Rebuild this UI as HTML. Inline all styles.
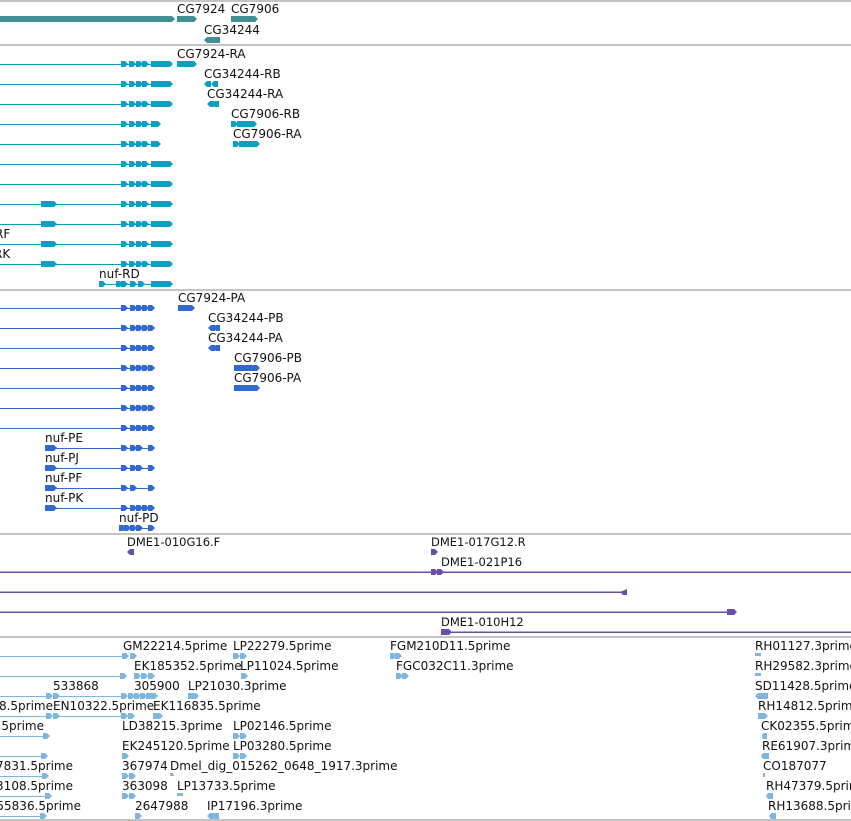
<!DOCTYPE html>
<html><head><meta charset="utf-8"><style>
html,body{margin:0;padding:0;background:#fff;width:851px;height:821px;overflow:hidden}
svg{display:block}
text{font-family:"DejaVu Sans","Liberation Sans",sans-serif;font-size:12px;fill:#111}
rect{shape-rendering:crispEdges}
</style></head><body>
<svg width="851" height="821" viewBox="0 0 851 821" xmlns="http://www.w3.org/2000/svg">
<defs>
<path id="ra" d="M0,-3h4l3,3l-3,3h-4z"/>
<path id="la" d="M7,-3h-4l-3,3l3,3h4z"/>
<path id="bigT" d="M151,-3h19l3,3l-3,3h-19z"/>
<path id="shortT" d="M151,-3h7l3,3l-3,3h-7z"/>
<g id="rowT"><rect x="0" y="0" width="151" height="1"/><use href="#ra" x="121"/><use href="#ra" x="129"/><use href="#ra" x="136"/><use href="#ra" x="142"/></g>
<g id="rowB"><rect x="0" y="0" width="150" height="1"/><use href="#ra" x="121"/><use href="#ra" x="130"/><use href="#ra" x="136"/><use href="#ra" x="142"/><use href="#ra" x="148"/></g>
</defs>
<g fill="#c4c4c4">
<rect x="0" y="0" width="851" height="2"/>
<rect x="0" y="44" width="851" height="2"/>
<rect x="0" y="289" width="851" height="2"/>
<rect x="0" y="533" width="851" height="2"/>
<rect x="0" y="636" width="851" height="2"/>
<rect x="0" y="819" width="851" height="2"/>
</g>

<g fill="#3f8f95">
<path d="M0,16h172l3,3l-3,3h-172z"/>
<path d="M177,16h17l3,3l-3,3h-17z"/>
<path d="M231,16h24l3,3l-3,3h-24z"/>
<path d="M207,37h13v6h-13l-3,-3z"/>
</g>
<text x="177" y="13">CG7924</text>
<text x="231" y="13">CG7906</text>
<text x="204" y="34">CG34244</text>

<g fill="#0b9fc1">
<g transform="translate(0,64)"><use href="#rowT"/><use href="#bigT"/><path d="M177,-3h17l3,3l-3,3h-17z"/></g>
<g transform="translate(0,84)"><use href="#rowT"/><use href="#bigT"/><use href="#la" x="204"/><use href="#la" x="211"/></g>
<g transform="translate(0,104)"><use href="#rowT"/><use href="#bigT"/><use href="#la" x="207"/><use href="#la" x="212"/></g>
<g transform="translate(0,124)"><use href="#rowT"/><use href="#shortT"/><use href="#ra" x="231"/><path d="M237,-3h17l3,3l-3,3h-17z"/></g>
<g transform="translate(0,144)"><use href="#rowT"/><use href="#shortT"/><use href="#ra" x="233"/><path d="M239,-3h14l3,3l-3,3h-14z"/><use href="#ra" x="253"/></g>
<g transform="translate(0,164)"><use href="#rowT"/><use href="#bigT"/></g>
<g transform="translate(0,184)"><use href="#rowT"/><use href="#bigT"/></g>
<g transform="translate(0,204)"><use href="#rowT"/><use href="#bigT"/><path d="M41,-3h13l3,3l-3,3h-13z"/></g>
<g transform="translate(0,224)"><use href="#rowT"/><use href="#bigT"/><path d="M41,-3h13l3,3l-3,3h-13z"/></g>
<g transform="translate(0,244)"><use href="#rowT"/><use href="#bigT"/><path d="M41,-3h13l3,3l-3,3h-13z"/></g>
<g transform="translate(0,264)"><use href="#rowT"/><use href="#bigT"/><path d="M41,-3h13l3,3l-3,3h-13z"/></g>
<g transform="translate(0,284)"><rect x="99" y="0" width="52" height="1"/><use href="#ra" x="99"/><use href="#ra" x="116"/><use href="#ra" x="121"/><use href="#ra" x="130"/><use href="#ra" x="138"/><use href="#bigT"/></g>
</g>
<text x="177" y="58">CG7924-RA</text>
<text x="204" y="78">CG34244-RB</text>
<text x="207" y="98">CG34244-RA</text>
<text x="231" y="118">CG7906-RB</text>
<text x="233" y="138">CG7906-RA</text>
<text x="-5" y="238">RF</text>
<text x="-6" y="258">RK</text>
<text x="99" y="278">nuf-RD</text>

<g fill="#3069cf">
<g transform="translate(0,308)"><use href="#rowB"/><path d="M178,-3h14l3,3l-3,3h-14z"/></g>
<g transform="translate(0,328)"><use href="#rowB"/><use href="#la" x="208"/><use href="#la" x="213"/></g>
<g transform="translate(0,348)"><use href="#rowB"/><use href="#la" x="208"/><use href="#la" x="213"/></g>
<g transform="translate(0,368)"><use href="#rowB"/><path d="M234,-3h19l3,3l-3,3h-19z"/><use href="#ra" x="253"/></g>
<g transform="translate(0,388)"><use href="#rowB"/><path d="M234,-3h19l3,3l-3,3h-19z"/><use href="#ra" x="253"/></g>
<g transform="translate(0,408)"><use href="#rowB"/></g>
<g transform="translate(0,428)"><use href="#rowB"/></g>
<g transform="translate(0,448)"><rect x="45" y="0" width="105" height="1"/><path d="M45,-3h9l3,3l-3,3h-9z"/><use href="#ra" x="121"/><use href="#ra" x="130"/><use href="#ra" x="136"/><use href="#ra" x="148"/></g>
<g transform="translate(0,468)"><rect x="45" y="0" width="105" height="1"/><path d="M45,-3h9l3,3l-3,3h-9z"/><use href="#ra" x="121"/><use href="#ra" x="130"/><use href="#ra" x="136"/><use href="#ra" x="148"/></g>
<g transform="translate(0,488)"><rect x="45" y="0" width="105" height="1"/><path d="M45,-3h9l3,3l-3,3h-9z"/><use href="#ra" x="121"/><use href="#ra" x="130"/><use href="#ra" x="148"/></g>
<g transform="translate(0,508)"><rect x="45" y="0" width="105" height="1"/><path d="M45,-3h9l3,3l-3,3h-9z"/><use href="#ra" x="121"/><use href="#ra" x="130"/><use href="#ra" x="136"/><use href="#ra" x="142"/><use href="#ra" x="148"/></g>
<g transform="translate(0,528)"><rect x="119" y="0" width="31" height="1"/><use href="#ra" x="119"/><use href="#ra" x="124"/><use href="#ra" x="130"/><use href="#ra" x="136"/><use href="#ra" x="148"/></g>
</g>
<text x="178" y="302">CG7924-PA</text>
<text x="208" y="322">CG34244-PB</text>
<text x="208" y="342">CG34244-PA</text>
<text x="234" y="362">CG7906-PB</text>
<text x="234" y="382">CG7906-PA</text>
<text x="45" y="442">nuf-PE</text>
<text x="45" y="462">nuf-PJ</text>
<text x="45" y="482">nuf-PF</text>
<text x="45" y="502">nuf-PK</text>
<text x="119" y="522">nuf-PD</text>

<g fill="#6a4fa8">
<path d="M130,549h4v6h-4l-3,-3z"/>
<path d="M431,549h4l3,3l-3,3h-4z"/>
<rect x="0" y="571.5" width="851" height="1.5"/><use href="#ra" x="431" y="572"/><use href="#ra" x="437" y="572"/>
<rect x="0" y="591.5" width="624" height="1.5"/><path d="M627,589v6h-4l-3,-3z"/>
<rect x="0" y="611.5" width="730" height="1.5"/><path d="M727,609h7l3,3l-3,3h-7z"/>
<rect x="441" y="631.5" width="410" height="1.5"/><path d="M441,629h8l3,3l-3,3h-8z"/>
</g>
<text x="127" y="546" style="font-size:11.5px">DME1-010G16.F</text>
<text x="431" y="546" style="font-size:11.5px">DME1-017G12.R</text>
<text x="441" y="566" style="font-size:11.5px">DME1-021P16</text>
<text x="441" y="626" style="font-size:11.5px">DME1-010H12</text>

<g fill="#7fb6de">
<rect x="0" y="656" width="124" height="1"/><use href="#ra" x="122" y="656"/><use href="#ra" x="130" y="656"/><use href="#ra" x="233" y="656"/><use href="#ra" x="240" y="656"/><use href="#ra" x="390" y="656"/><use href="#ra" x="395" y="656"/><path d="M755,653h6v3h-6z"/>
<rect x="0" y="676" width="124" height="1"/><use href="#ra" x="120" y="676"/><use href="#ra" x="134" y="676"/><use href="#ra" x="141" y="676"/><use href="#ra" x="148" y="676"/><use href="#ra" x="241" y="676"/><use href="#ra" x="396" y="676"/><use href="#ra" x="402" y="676"/><path d="M755,673h6v3h-6z"/>
<rect x="0" y="696" width="48" height="1"/><use href="#ra" x="46" y="696"/><rect x="53" y="696" width="72" height="1"/><use href="#ra" x="53" y="696"/><use href="#ra" x="121" y="696"/><use href="#ra" x="128" y="696"/><use href="#ra" x="134" y="696"/><use href="#ra" x="140" y="696"/><use href="#ra" x="146" y="696"/><use href="#ra" x="151" y="696"/><path d="M188,693h8l3,3l-3,3h-8z"/><path d="M758,693h10v6h-10l-3,-3z"/>
<rect x="0" y="716" width="48" height="1"/><use href="#ra" x="46" y="716"/><rect x="53" y="716" width="75" height="1"/><use href="#ra" x="53" y="716"/><use href="#ra" x="121" y="716"/><use href="#ra" x="128" y="716"/><path d="M153,713h7l3,3l-3,3h-7z"/><path d="M758,713h7l3,3l-3,3h-7z"/>
<rect x="0" y="736" width="46" height="1"/><use href="#ra" x="43" y="736"/><use href="#ra" x="233" y="736"/><use href="#ra" x="240" y="736"/><path d="M763,733h4v6h-4l-1,-3z"/>
<rect x="0" y="756" width="44" height="1"/><use href="#ra" x="41" y="756"/><use href="#ra" x="122" y="756"/><use href="#ra" x="233" y="756"/><use href="#ra" x="240" y="756"/><path d="M763,753h6v6h-6l-2,-3z"/>
<rect x="0" y="776" width="47" height="1"/><use href="#ra" x="42" y="776"/><use href="#ra" x="122" y="776"/><use href="#ra" x="129" y="776"/><path d="M170,773h3l1,3l-1,0h-3z"/><path d="M763,773h2v4h-2z"/>
<rect x="0" y="796" width="50" height="1"/><use href="#ra" x="45" y="796"/><use href="#ra" x="122" y="796"/><use href="#ra" x="129" y="796"/><path d="M177,793h6v3h-6z"/><path d="M768,793h5v6h-5l-2,-3z"/>
<rect x="0" y="816" width="44" height="1"/><use href="#ra" x="40" y="816"/><use href="#ra" x="135" y="816"/><use href="#la" x="207" y="816"/><use href="#la" x="212" y="816"/><path d="M771,813h5v6h-5l-2,-3z"/>
</g>
<text x="123" y="650">GM22214.5prime</text>
<text x="233" y="650">LP22279.5prime</text>
<text x="390" y="650">FGM210D11.5prime</text>
<text x="755" y="650">RH01127.3prime</text>
<text x="134" y="670">EK185352.5prime</text>
<text x="240" y="670">LP11024.5prime</text>
<text x="396" y="670">FGC032C11.3prime</text>
<text x="755" y="670">RH29582.3prime</text>
<text x="53" y="690">533868</text>
<text x="134" y="690">305900</text>
<text x="188" y="690">LP21030.3prime</text>
<text x="755" y="690">SD11428.5prime</text>
<text x="53" y="710" text-anchor="end">8.5prime</text>
<text x="53" y="710">EN10322.5prime</text>
<text x="153" y="710">EK116835.5prime</text>
<text x="758" y="710">RH14812.5prime</text>
<text x="44" y="730" text-anchor="end">.5prime</text>
<text x="122" y="730">LD38215.3prime</text>
<text x="233" y="730">LP02146.5prime</text>
<text x="761" y="730">CK02355.5prime</text>
<text x="122" y="750">EK245120.5prime</text>
<text x="233" y="750">LP03280.5prime</text>
<text x="762" y="750">RE61907.3prime</text>
<text x="73" y="770" text-anchor="end">7831.5prime</text>
<text x="122" y="770">367974</text>
<text x="170" y="770">Dmel_dig_015262_0648_1917.3prime</text>
<text x="763" y="770">CO187077</text>
<text x="73" y="790" text-anchor="end">3108.5prime</text>
<text x="122" y="790">363098</text>
<text x="177" y="790">LP13733.5prime</text>
<text x="766" y="790">RH47379.5prime</text>
<text x="81" y="810" text-anchor="end">55836.5prime</text>
<text x="135" y="810">2647988</text>
<text x="207" y="810">IP17196.3prime</text>
<text x="768" y="810">RH13688.5prime</text>
</svg>
</body></html>
